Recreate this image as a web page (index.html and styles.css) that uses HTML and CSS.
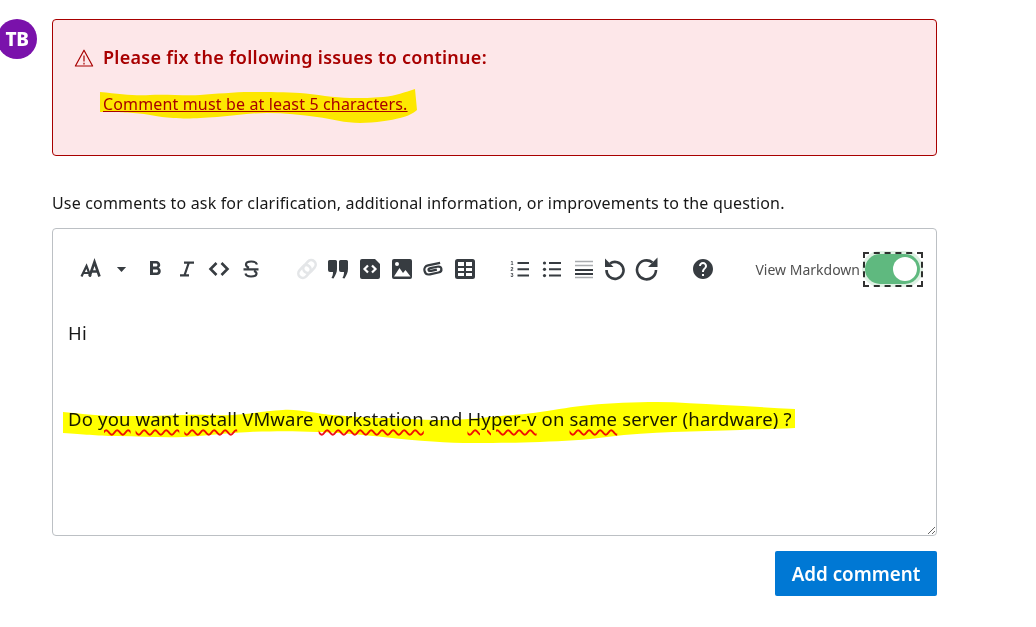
FILE: index.html
```html
<!DOCTYPE html>
<html lang="en">
  <head>
    <meta charset="UTF-8" />
    <meta name="viewport" content="width=device-width, initial-scale=1.0" />
    <title>Add comment</title>
    <link rel="stylesheet" href="styles.css">
  </head>
  <body>
    <div class="comment_row">
      <div class="avatar_col">
        <div class="avatar">TB</div>
      </div>

      <div class="comment_form">
        <div class="alert">
          <div class="alert_title">
            <svg class="alert_icon" viewBox="0 0 20 20" width="20" height="20">
              <path d="M10 2.200 18.600 18H1.400z" fill="none" stroke="#a80000" stroke-width="1.200" stroke-linejoin="round" />
              <path d="M10 7.500v6M10 14.800v1.600" fill="none" stroke="#a80000" stroke-width="1.200" />
            </svg>
            <span>Please fix the following issues to continue:</span>
          </div>
          <a class="alert_link" href="#">Comment must be at least 5 characters.</a>
        </div>

        <p class="hint">Use comments to ask for clarification, additional information, or improvements to the question.</p>

        <div class="editor">
          <div class="toolbar">
            <div class="tool_group">
              <span class="tool">
                <svg viewBox="0 0 24 24" width="24" height="24" fill="none" stroke="#373c41">
                  <path d="M2.500 19.500 7.500 9l4 10.500M4.500 16h6" stroke-width="2.200" />
                  <path d="M10.500 19.500 15.500 5l5 14.500M12.500 14.500h6" stroke-width="2.600" />
                </svg>
              </span>
              <span class="tool tool_caret">
                <svg viewBox="0 0 12 6" width="11" height="5"><path d="M0.500 0h11L6 6z" fill="#373c41" /></svg>
              </span>
              <span class="tool">
                <svg viewBox="0 0 24 24" width="24" height="24" fill="#373c41"><path d="M15.600 10.790c.97-.67 1.650-1.770 1.650-2.790 0-2.260-1.750-4-4-4H7v14h7.040c2.090 0 3.710-1.700 3.710-3.790 0-1.520-.86-2.820-2.150-3.420zM10 6.500h3c.83 0 1.500.67 1.500 1.500s-.67 1.500-1.500 1.500h-3v-3zm3.500 9H10v-3h3.500c.83 0 1.500.67 1.500 1.500s-.67 1.500-1.500 1.500z" /></svg>
              </span>
              <span class="tool">
                <svg viewBox="0 0 24 24" width="24" height="24" fill="#373c41"><path d="M9 4.500v2.200h3.300L8.700 17.300H5v2.200h9v-2.200h-3l3.600-10.600H19V4.500z" /></svg>
              </span>
              <span class="tool">
                <svg viewBox="0 0 24 24" width="24" height="24" fill="none" stroke="#373c41" stroke-width="2.600"><path d="M9.500 6 3.500 12l6 6M14.500 6l6 6-6 6" /></svg>
              </span>
              <span class="tool">
                <svg viewBox="0 0 24 24" width="24" height="24" fill="none" stroke="#373c41" stroke-width="2.200"><path d="M18 7.500c-.6-2-2.800-3-5.800-3-3.200 0-5.200 1.200-5.200 3 0 1.500 1 2.500 3 3.200M15 14c2 .7 2.500 1.300 2.500 2.500 0 1.800-2.300 3-5.500 3-3 0-5-1-5.500-3M4.500 12.300h15" /></svg>
              </span>
            </div>

            <div class="tool_group tight">
              <span class="tool">
                <svg viewBox="0 0 24 24" width="24" height="24" fill="none" stroke="#e4e6e8" stroke-width="2.600">
                  <rect x="10" y="2.500" width="9" height="14" rx="4.500" transform="rotate(42 14.500 9.500)" />
                  <rect x="5" y="7.500" width="9" height="14" rx="4.500" transform="rotate(42 9.500 14.500)" />
                </svg>
              </span>
              <span class="tool">
                <svg viewBox="0 0 24 24" width="24" height="24" fill="#373c41">
                  <path d="M2 4.500A1.500 1.500 0 0 1 3.500 3h6A1.500 1.500 0 0 1 11 4.500V12c0 3.500-1.500 6-3.500 9.500l-2-.5c1-2 1.500-3.500 1.500-6H4a2 2 0 0 1-2-2z" />
                  <path d="M13 4.500A1.500 1.500 0 0 1 14.500 3h6A1.500 1.500 0 0 1 22 4.500V12c0 3.500-1.500 6-3.500 9.500l-2-.5c1-2 1.500-3.500 1.500-6h-3a2 2 0 0 1-2-2z" />
                </svg>
              </span>
              <span class="tool">
                <svg viewBox="0 0 24 24" width="24" height="24">
                  <path d="M4 2h13l5 5v13a2 2 0 0 1-2 2H4a2 2 0 0 1-2-2V4a2 2 0 0 1 2-2z" fill="#373c41" />
                  <path d="M10 8.500 6.500 12l3.500 3.500M14 8.500l3.500 3.500-3.500 3.500" fill="none" stroke="#fff" stroke-width="2.200" />
                </svg>
              </span>
              <span class="tool">
                <svg viewBox="0 0 24 24" width="24" height="24">
                  <rect x="2" y="2" width="20" height="20" rx="2" fill="#373c41" />
                  <circle cx="7" cy="7" r="2" fill="#fff" />
                  <path d="M4 19.500 9.500 11l3.500 5 2.500-3 5 6.500z" fill="#fff" />
                </svg>
              </span>
              <span class="tool">
                <svg viewBox="0 0 24 24" width="22" height="22" fill="none" stroke="#373c41" stroke-width="2.400"><path d="M21 7 7.500 7C4.500 7 2.500 9 2.500 12S4.500 17 7.500 17H17c2.500 0 4-1.500 4-3.500S19.500 10.500 17 10.500H9.500c-1.500 0-2.500.5-2.500 1.500s1 1.500 2.500 1.500H16" transform="rotate(-12 12 12)" /></svg>
              </span>
              <span class="tool">
                <svg viewBox="0 0 24 24" width="24" height="24">
                  <rect x="2" y="2" width="20" height="20" rx="2.500" fill="#373c41" />
                  <path d="M5 5h6v4H5zM13 5h6v4h-6zM5 11h6v3H5zM13 11h6v3h-6zM5 16h6v3H5zM13 16h6v3h-6z" fill="#fff" />
                </svg>
              </span>
            </div>

            <div class="tool_group tight">
              <span class="tool">
                <svg viewBox="0 0 24 24" width="24" height="24">
                  <text class="list_num" x="2.500" y="7.800">1</text>
                  <text class="list_num" x="2.500" y="14.100">2</text>
                  <text class="list_num" x="2.500" y="20.400">3</text>
                  <path d="M9.500 6h11.500M9.500 12.300h11.500M9.500 18.600h11.500" stroke="#373c41" stroke-width="2" />
                </svg>
              </span>
              <span class="tool">
                <svg viewBox="0 0 24 24" width="24" height="24">
                  <circle cx="4.500" cy="6" r="1.600" fill="#373c41" />
                  <circle cx="4.500" cy="12.300" r="1.600" fill="#373c41" />
                  <circle cx="4.500" cy="18.600" r="1.600" fill="#373c41" />
                  <path d="M9 6h12M9 12.300h12M9 18.600h12" stroke="#373c41" stroke-width="2" />
                </svg>
              </span>
              <span class="tool">
                <svg viewBox="0 0 24 24" width="24" height="24">
                  <path d="M3 4.500h18M3 8.500h18M3 20.500h18" stroke="#a9acaf" stroke-width="1.300" />
                  <path d="M3 13h18M3 17h18" stroke="#373c41" stroke-width="1.800" />
                </svg>
              </span>
              <span class="tool">
                <svg viewBox="0 0 24 24" width="24" height="24" fill="none" stroke="#373c41" stroke-width="2.600">
                  <path d="M7 6.500A8.500 8.500 0 1 1 3.500 13" />
                  <path d="M2 1.500v8.500h8.500z" fill="#373c41" stroke="none" />
                </svg>
              </span>
              <span class="tool">
                <svg viewBox="0 0 24 24" width="24" height="24" fill="none" stroke="#373c41" stroke-width="2.600">
                  <path d="M17.500 5.500A9.500 9.500 0 1 0 21 13" />
                  <path d="M22.500 0.500v9.500h-9.500z" fill="#373c41" stroke="none" />
                </svg>
              </span>
            </div>

            <div class="tool_group">
              <span class="tool">
                <svg viewBox="0 0 24 24" width="24" height="24" fill="#373c41"><path d="M12 2C6.480 2 2 6.480 2 12s4.480 10 10 10 10-4.480 10-10S17.520 2 12 2zm1 17h-2v-2h2v2zm2.070-7.750l-.9.920C13.450 12.900 13 13.500 13 15h-2v-.5c0-1.100.45-2.100 1.170-2.830l1.240-1.260c.37-.36.59-.86.59-1.410 0-1.100-.9-2-2-2s-2 .9-2 2H8c0-2.210 1.790-4 4-4s4 1.790 4 4c0 .88-.36 1.680-.93 2.250z" /></svg>
              </span>
            </div>

            <div class="markdown_switch">
              <span class="markdown_label">View Markdown</span>
              <span class="toggle_focus">
                <span class="toggle">
                  <span class="toggle_knob"></span>
                </span>
              </span>
            </div>
          </div>

          <div class="editor_body">
            <p>Hi</p>
            <p>&nbsp;</p>
            <p>Do <span class="typo">you</span> <span class="typo">want</span> <span class="typo">install</span> VMware <span class="typo">workstation</span> and <span class="typo">Hyper-v</span> on <span class="typo">same</span> server (hardware) ?</p>
          </div>
        </div>

        <div class="actions">
          <button class="add_btn">Add comment</button>
        </div>
      </div>
    </div>

    <!-- yellow marker scribbles drawn over the page -->
    <svg class="scribbles" viewBox="0 0 1036 627" width="1036" height="627">
      <path d="M100 92C120 94 135 96 150 95S185 96 200 95 235 92 250 92 285 92 300 93 335 98 350 98 370 98 383 97 405 92 415 89L417 110C412 114 408 116 400 118S375 123 360 123 332 119 317 117 285 113 267 113 235 116 217 117 190 119 173 118 150 114 133 113 115 112 100 112Z" />
      <path d="M63 412C85 414 100 416 117 416S165 416 183 415 215 416 233 415 265 411 283 410 315 414 333 415 365 418 383 418 420 420 440 420 470 419 490 417 520 415 540 412 570 407 590 405 635 402 657 402 700 404 723 405 770 408 795 409L795 428C775 429 760 429 740 430S695 431 673 432 630 434 607 437 565 441 540 442 498 443 473 443 420 441 383 437 340 433 317 432 275 431 250 432 205 436 183 437 140 436 117 436 85 434 63 433Z" />
    </svg>
  </body>
</html>
```

FILE: styles.css
```css
* {
  box-sizing: border-box;
}

body {
  margin: 0;
  background: white;
  color: #171717;
  font-family: "Noto Sans", "Open Sans", sans-serif;
  overflow: hidden;
}

p {
  margin: 0;
}

.comment_row {
  display: flex;
  padding-top: 19px;
}

.avatar_col {
  width: 52px;
  flex: none;
}

.avatar {
  width: 40px;
  height: 40px;
  margin-left: -3px;
  border-radius: 50%;
  background: #7a12ab;
  color: white;
  display: grid;
  place-items: center;
  font-size: 19px;
  font-weight: 800;
  letter-spacing: -0.5px;
}

.comment_form {
  width: 885px;
  flex: none;
}

.alert {
  height: 137px;
  padding: 24px 21px 0;
  background: #fde7e9;
  border: 1px solid #a80000;
  border-radius: 4px;
  color: #a80000;
}

.alert_title {
  display: flex;
  align-items: center;
  gap: 9px;
  font-size: 18px;
  line-height: 27px;
  font-weight: 600;
  letter-spacing: 0.27px;
}

.alert_icon {
  flex: none;
  margin-top: 1px;
}

.alert_link {
  display: block;
  margin: 21px 0 0 29px;
  color: #a80000;
  font-size: 16px;
  line-height: 24px;
  letter-spacing: 0.15px;
}

.hint {
  margin-top: 35px;
  font-size: 16px;
  line-height: 24px;
  letter-spacing: 0.17px;
}

.editor {
  margin-top: 13px;
  height: 308px;
  border: 1px solid #bcc0c4;
  border-radius: 4px;
  overflow: auto;
  resize: vertical;
}

.toolbar {
  display: flex;
  align-items: center;
  gap: 24px;
  height: 62px;
  padding: 18px 13px 0 22px;
}

.tool_group {
  display: flex;
  align-items: center;
}

.tool {
  width: 32px;
  height: 32px;
  display: grid;
  place-items: center;
}

.tight .tool {
  width: 31.600px;
}

.tool_caret {
  width: 28px;
  margin-right: 4px;
}

.list_num {
  font-family: "Liberation Sans", sans-serif;
  font-size: 5.400px;
  font-weight: 700;
  fill: #373c41;
}

.markdown_switch {
  margin-left: auto;
  display: flex;
  align-items: center;
  gap: 3px;
}

.markdown_label {
  font-size: 14px;
  color: #505050;
}

.toggle_focus {
  display: block;
  width: 60px;
  height: 35px;
  padding: 3px 3px;
  outline: 2px dashed rgba(0, 0, 0, 0.8);
  outline-offset: -2px;
}

.toggle {
  display: flex;
  justify-content: flex-end;
  align-items: center;
  width: 55px;
  height: 30px;
  margin: -1px 0 0 -1px;
  padding-right: 3px;
  border-radius: 15px;
  background: #5fb97f;
  box-shadow: 0 0 0 3px #dff1e4;
}

.toggle_knob {
  width: 24px;
  height: 24px;
  border-radius: 50%;
  background: white;
}

.editor_body {
  padding: 28px 15px 0;
  font-size: 18.500px;
  line-height: 27px;
  letter-spacing: 0.17px;
}

.editor_body p {
  margin-bottom: 16px;
}

.typo {
  text-decoration: underline wavy #f01020 1.500px;
  text-underline-offset: 3px;
}

.actions {
  display: flex;
  justify-content: flex-end;
  margin-top: 15px;
}

.add_btn {
  width: 162px;
  height: 45px;
  border: none;
  border-radius: 2px;
  background: #0078d4;
  color: white;
  font-family: inherit;
  font-size: 18.800px;
  font-weight: 600;
}

.scribbles {
  position: absolute;
  top: 0;
  left: 0;
  fill: #ffff00;
  mix-blend-mode: multiply;
  pointer-events: none;
}
```
